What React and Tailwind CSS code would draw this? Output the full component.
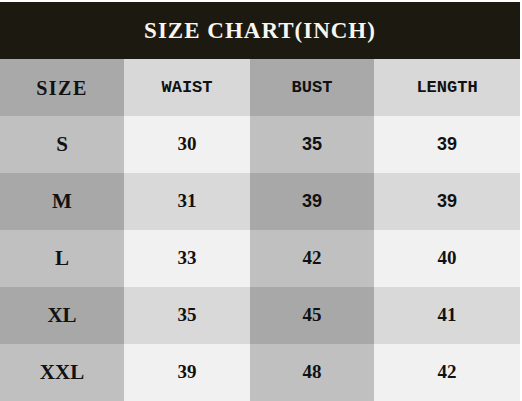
const rows = [
  { size: "S", waist: "30", bust: "35", length: "39", sans: true },
  { size: "M", waist: "31", bust: "39", length: "39", sans: true },
  { size: "L", waist: "33", bust: "42", length: "40" },
  { size: "XL", waist: "35", bust: "45", length: "41" },
  { size: "XXL", waist: "39", bust: "48", length: "42" },
];

const serif = "font-['Liberation_Serif',serif]";
const sansNum = "font-['Liberation_Sans',Arial,sans-serif] font-bold text-[18px]";
const serifNum = `${serif} font-bold text-[19px]`;
const mono = "font-['Liberation_Mono',monospace] font-bold text-[17px]";

function Cell({ bg, children, className = "" }) {
  return (
    <div className={`flex items-center justify-center text-[#111] ${bg} ${className}`}>
      {children}
    </div>
  );
}

export default function App() {
  return (
    <div className="w-[522px] h-[401px] bg-white overflow-hidden">
      <div className="w-[520px] pt-[2px]">
        <div className="h-[57px] bg-[#1c1911] flex items-center justify-center">
          <h1 className={`${serif} font-bold text-[23px] tracking-[1px] text-[#f7f6f0] leading-none`}>
            SIZE CHART(INCH)
          </h1>
        </div>
        <div className="grid grid-cols-[124px_126px_124px_146px] auto-rows-[57px]">
          <Cell bg="bg-[#a9a9a9]">
            <span className={`${serif} font-bold text-[20px] tracking-[1.5px]`}>SIZE</span>
          </Cell>
          <Cell bg="bg-[#d8d8d8]">
            <span className={mono}>WAIST</span>
          </Cell>
          <Cell bg="bg-[#a9a9a9]">
            <span className={mono}>BUST</span>
          </Cell>
          <Cell bg="bg-[#d8d8d8]">
            <span className={mono}>LENGTH</span>
          </Cell>
          {rows.map((r, i) => {
            const odd = i % 2 === 0;
            const dark = odd ? "bg-[#c0c0c0]" : "bg-[#a8a8a8]";
            const light = odd ? "bg-[#f1f1f1]" : "bg-[#d9d9d9]";
            const num = r.sans ? sansNum : serifNum;
            return (
              <div key={r.size} className="contents">
                <Cell bg={dark}>
                  <span className={`${serif} font-bold text-[21px]`}>{r.size}</span>
                </Cell>
                <Cell bg={light}>
                  <span className={serifNum}>{r.waist}</span>
                </Cell>
                <Cell bg={dark}>
                  <span className={num}>{r.bust}</span>
                </Cell>
                <Cell bg={light}>
                  <span className={num}>{r.length}</span>
                </Cell>
              </div>
            );
          })}
        </div>
      </div>
    </div>
  );
}
